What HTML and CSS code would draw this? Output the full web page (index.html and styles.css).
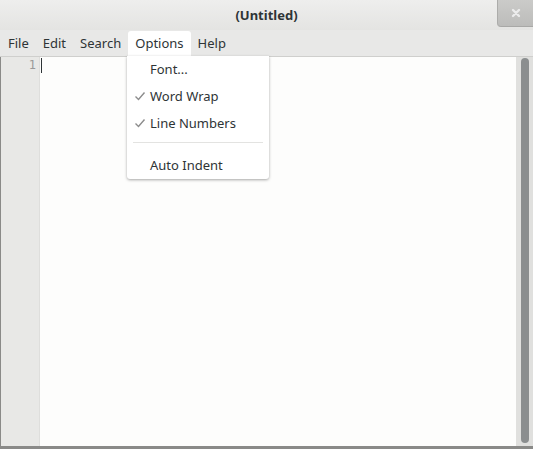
FILE: index.html
```html
<!DOCTYPE html>
<html>
<head>
<meta charset="utf-8">
<link rel="stylesheet" href="styles.css">
</head>
<body>
<div class="window">
  <div class="titlebar">
    <div class="title">(Untitled)</div>
    <div class="close"><svg width="12" height="12" viewBox="0 0 12 12"><path d="M3 3 L9 9 M9 3 L3 9" stroke="#ececec" stroke-width="2.4" stroke-linecap="round"/></svg></div>
  </div>
  <div class="menubar">
    <div class="mi">File</div>
    <div class="mi">Edit</div>
    <div class="mi">Search</div>
    <div class="mi active">Options</div>
    <div class="mi">Help</div>
  </div>
  <div class="editor">
    <div class="gutter"><span class="ln">1</span></div>
    <div class="text"><span class="cursor"></span></div>
    <div class="scroll"><div class="thumb"></div></div>
  </div>
  <div class="menu">
    <div class="item"><span class="chk"></span>Font...</div>
    <div class="item"><span class="chk"><svg width="12" height="10" viewBox="0 0 12 10"><path d="M1.5 5.5 L4.5 8.5 L10.5 1.5" fill="none" stroke="#8c8c8c" stroke-width="1.4"/></svg></span>Word Wrap</div>
    <div class="item"><span class="chk"><svg width="12" height="10" viewBox="0 0 12 10"><path d="M1.5 5.5 L4.5 8.5 L10.5 1.5" fill="none" stroke="#8c8c8c" stroke-width="1.4"/></svg></span>Line Numbers</div>
    <div class="sep"></div>
    <div class="item"><span class="chk"></span>Auto Indent</div>
  </div>
</div>
</body>
</html>
```
FILE: styles.css
```css
html, body { margin: 0; padding: 0; }
body { width: 533px; height: 449px; overflow: hidden; font-family: "Noto Sans", "DejaVu Sans", sans-serif; font-size: 13px; color: #2e3436; }
.window { position: relative; width: 533px; height: 449px; display: flex; flex-direction: column; background: #e8e8e7; }
.titlebar { height: 30px; display: flex; align-items: center; justify-content: center; position: relative; background: linear-gradient(#eeeeed, #e4e4e2); }
.title { font-weight: bold; font-size: 13px; color: #2e3436; padding-bottom: 1px; }
.close { position: absolute; right: 0; top: 0; width: 35px; height: 26px; background: linear-gradient(#cbcbc9, #bcbcba); border-left: 1px solid #acacaa; border-bottom: 1px solid #a8a8a6; border-bottom-left-radius: 4px; display: flex; align-items: center; justify-content: center; }
.menubar { height: 26px; display: flex; align-items: stretch; padding-left: 1px; border-bottom: 1px solid #cfcfcd; }
.mi { padding: 0 7px; display: flex; align-items: center; padding-bottom: 1px; }
.active { background: #ffffff; border-radius: 3px 3px 0 0; margin-top: 1px; }
.editor { flex: 1; display: flex; border-left: 1px solid #8a8a88; border-bottom: 3px solid #8a8a88; }
.gutter { width: 38px; background: #e8e8e6; border-right: 1px solid #dededc; text-align: right; }
.ln { display: block; padding: 0 3px 0 0; font-family: "DejaVu Sans Mono", monospace; font-size: 12px; color: #999; line-height: 14px; margin-top: 1px; }
.text { flex: 1; background: #fdfdfc; padding-left: 1px; }
.cursor { display: block; width: 1px; height: 15px; background: #2e3436; margin-top: 1px; }
.scroll { width: 17px; background: #e0e0de; display: flex; justify-content: center; padding-top: 1px; }
.thumb { width: 8px; height: 385px; background: #8b8e8f; border-radius: 4px; }
.menu { position: absolute; left: 127px; top: 56px; width: 142px; background: #ffffff; box-shadow: 0 1px 3px rgba(0,0,0,0.35); border-radius: 0 0 3px 3px; padding: 0; }
.item { height: 27px; display: flex; align-items: center; padding-left: 7px; padding-bottom: 1px; box-sizing: border-box; }
.chk { width: 16px; display: flex; align-items: center; }
.sep { height: 1px; background: #e3e3e1; margin: 5px 6px 9px; }
```
